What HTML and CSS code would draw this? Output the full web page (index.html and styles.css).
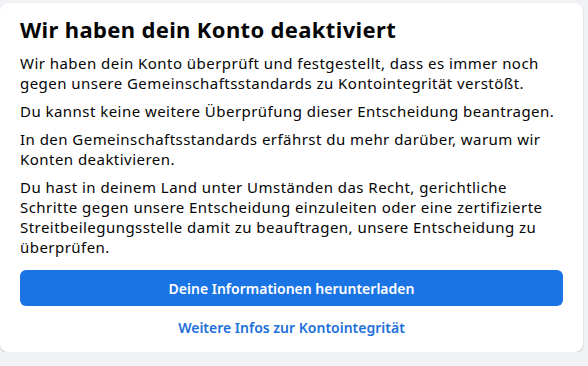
FILE: index.html
```html
<!DOCTYPE html>
<html lang="de">
<head>
  <meta charset="UTF-8">
  <meta name="viewport" content="width=device-width, initial-scale=1.0">
  <title>Konto deaktiviert</title>
  <link rel="stylesheet" href="styles.css">
</head>
<body>
  <main class="card">
    <h1>Wir haben dein Konto deaktiviert</h1>
    <p>Wir haben dein Konto überprüft und festgestellt, dass es immer noch gegen unsere Gemeinschaftsstandards zu Kontointegrität verstößt.</p>
    <p>Du kannst keine weitere Überprüfung dieser Entscheidung beantragen.</p>
    <p>In den Gemeinschaftsstandards erfährst du mehr darüber, warum wir Konten deaktivieren.</p>
    <p>Du hast in deinem Land unter Umständen das Recht, gerichtliche Schritte gegen unsere Entscheidung einzuleiten oder eine zertifizierte Streitbeilegungsstelle damit zu beauftragen, unsere Entscheidung zu überprüfen.</p>
    <button class="primary-btn">Deine Informationen herunterladen</button>
    <a class="more-link" href="#">Weitere Infos zur Kontointegrität</a>
  </main>
</body>
</html>
```

FILE: styles.css
```css
body {
  font-family: "Noto Sans", Arial, sans-serif;
  margin: 0;
  padding: 3px 5px 0 0;
  background-color: #f0f2f5;
  color: #1c1e21;
}
.card {
  background-color: #ffffff;
  border-radius: 8px;
  box-shadow: 0 1px 2px rgba(0, 0, 0, 0.2);
  padding: 12px 20px 0 20px;
  box-sizing: border-box;
  height: 349px;
}
h1 {
  font-size: 22px;
  font-weight: 700;
  letter-spacing: 0.35px;
  margin: 0 0 10px 0;
  line-height: 28px;
  color: #050505;
}
p {
  font-size: 15px;
  line-height: 20px;
  letter-spacing: 0.46px;
  margin: 0 0 8px 0;
  color: #050505;
}
.primary-btn {
  display: block;
  width: 100%;
  height: 36px;
  margin-top: 13px;
  background-color: #1b74e4;
  color: white;
  border: none;
  border-radius: 6px;
  font-family: inherit;
  font-size: 14px;
  font-weight: 600;
  cursor: pointer;
}
.more-link {
  display: block;
  text-align: center;
  margin-top: 12px;
  line-height: 20px;
  color: #216fdb;
  font-size: 14px;
  font-weight: 600;
  text-decoration: none;
}
```
